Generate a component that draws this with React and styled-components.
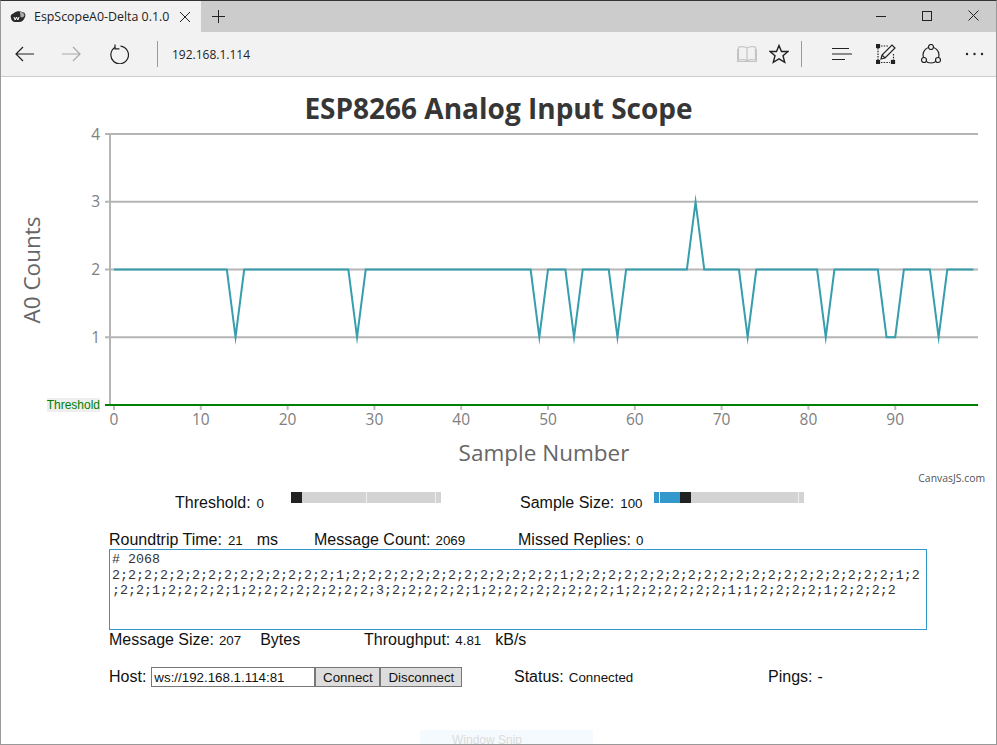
import React from 'react';
import styled, { createGlobalStyle } from 'styled-components';

const GlobalStyle = createGlobalStyle`
html, body { margin: 0; padding: 0; background: #fff; }
body { font-family: "Liberation Sans", Arial, sans-serif; }
`;

const Frame = styled.div`
position: relative;
width: 997px;
height: 745px;
box-sizing: border-box;
overflow: hidden;
background: #fff;
border: 1px solid #999;
border-top-color: #333;
`;

const TabBar = styled.div`
display: flex;
height: 31px;
background: #ccc;
`;
const Tab = styled.div`
display: flex;
align-items: center;
width: 200px;
padding-left: 9px;
box-sizing: border-box;
background: #f2f2f2;
`;
const TabTitle = styled.span`
flex: 1;
margin-left: 8px;
font-family: "Open Sans", sans-serif;
font-size: 12.4px;
color: #222;
white-space: nowrap;
`;
const TabClose = styled.span`
display: flex;
margin-right: 10px;
`;
const NewTab = styled.span`
display: flex;
align-items: center;
margin-left: 11px;
`;
const WindowControls = styled.div`
display: flex;
margin-left: auto;
`;
const WindowButton = styled.span`
display: flex;
align-items: center;
justify-content: center;
width: 46px;
padding-bottom: 2px;
`;

const Toolbar = styled.div`
display: flex;
align-items: center;
height: 44px;
background: #f2f2f2;
border-bottom: 1px solid #ccc;
`;
const Slot = styled.span`
display: flex;
align-items: center;
justify-content: center;
flex: none;
width: ${p => p.$w}px;
padding-bottom: 1px;
`;
const Divider = styled.span`
flex: none;
width: 1px;
height: 26px;
background: #999;
margin-left: ${p => p.$left}px;
margin-right: ${p => p.$right || 0}px;
`;
const Url = styled.span`
margin-left: 14px;
font-family: "Open Sans", sans-serif;
font-size: 12px;
color: #222;
`;
const ToolbarRight = styled.div`
display: flex;
align-items: center;
margin-left: auto;
`;

const ChartSvg = styled.svg`
display: block;
width: 995px;
height: 413px;
`;
const Title = styled.text`
font-family: "Open Sans", sans-serif;
font-weight: 700;
font-size: 28px;
fill: #363636;
text-anchor: middle;
`;
const AxisTitle = styled.text`
font-family: "Open Sans", sans-serif;
font-size: 22.5px;
fill: #666;
text-anchor: middle;
`;
const TickLabel = styled.text`
font-family: "Open Sans", sans-serif;
font-size: 15.5px;
fill: #808080;
text-anchor: ${p => p.$anchor};
`;
const ThresholdLabel = styled.text`
font-family: "Liberation Sans", sans-serif;
font-size: 12px;
fill: #008000;
text-anchor: end;
`;
const Credit = styled.text`
font-family: "Open Sans", sans-serif;
font-size: 10.4px;
fill: #555;
text-anchor: end;
`;

const SliderRow = styled.div`
display: flex;
height: 26px;
padding-left: 174px;
`;
const StatRow = styled.div`
display: flex;
align-items: center;
height: ${p => p.$h}px;
margin-top: ${p => p.$top}px;
padding-left: 108px;
`;
const Cell = styled.div`
display: flex;
align-items: center;
flex: none;
width: ${p => p.$w}px;
margin-left: ${p => p.$left || 0}px;
white-space: nowrap;
`;
const Label = styled.span`
font-size: 16px;
color: #111;
`;
const Value = styled.span`
margin-left: ${p => p.$gap || 5}px;
font-size: 13.33px;
color: #111;
`;
const Unit = styled.span`
margin-left: ${p => p.$left}px;
font-size: 16px;
color: #111;
`;

const Track = styled.div`
position: relative;
display: flex;
flex: none;
width: 150px;
height: 11px;
margin-top: 2px;
background: #d3d3d3;
`;
const Fill = styled.span`
flex: none;
width: ${p => p.$w}px;
background: #3399cc;
`;
const Thumb = styled.span`
flex: none;
width: 11px;
background: #222;
`;
const Tick = styled.span`
position: absolute;
top: 0;
bottom: 0;
left: ${p => p.$at}px;
width: 1px;
background: #eee;
`;

const LogBox = styled.textarea`
display: block;
width: 818px;
height: 81px;
margin: 0 0 0 108px;
padding: 2px 2px;
box-sizing: border-box;
border: 1px solid #3399cc;
border-radius: 0;
outline: none;
resize: none;
overflow: hidden;
font-family: "Liberation Mono", monospace;
font-size: 13.33px;
line-height: 15.5px;
color: #333;
white-space: pre;
`;

const HostInput = styled.input`
width: 164px;
height: 20px;
box-sizing: border-box;
margin: 0 0 0 5px;
padding: 0 2px;
border: 1px solid #777;
border-radius: 0;
font-family: "Liberation Sans", sans-serif;
font-size: 13.33px;
color: #111;
outline: none;
`;
const ActionButton = styled.button`
width: ${p => p.$w}px;
height: 20px;
box-sizing: border-box;
margin: 0;
padding: 0;
border: 1px solid #777;
background: #ddd;
font-family: "Liberation Sans", sans-serif;
font-size: 13.33px;
color: #111;
`;

const SnipHint = styled.div`
position: absolute;
left: 419px;
bottom: 0;
width: 173px;
height: 14px;
padding-left: 32px;
box-sizing: border-box;
background: #f4fafe;
font-size: 12px;
line-height: 20px;
color: #dcdcdc;
overflow: hidden;
`;

const samples = Array.from({ length: 100 }, () => 2);
[14, 28, 49, 53, 58, 73, 82, 89, 90, 95].forEach(i => { samples[i] = 1; });
samples[67] = 3;

const xAt = i => 114 + i * 8.68;
const yAt = v => 405 - v * 67.75;
const points = samples.map((v, i) => `${xAt(i).toFixed(2)},${yAt(v).toFixed(2)}`).join(' ');
const joined = samples.join(';');
// the box breaks right after 101 characters, even before a semicolon
const logText = `# 2068\n${joined.slice(0, 101)}\n${joined.slice(101)}`;

const Icon = ({ w = 20, h = 20, children, color = '#222', sw = 1.2 }) => (
  <svg width={w} height={h} viewBox={`0 0 ${w} ${h}`} fill="none" stroke={color} strokeWidth={sw}>
    {children}
  </svg>
);

const Chart = () => (
  <ChartSvg viewBox="1 77 995 413">
    <Title x="498.5" y="119">ESP8266 Analog Input Scope</Title>
    {[4, 3, 2, 1].map(v => (
      <g key={v}>
        <line x1="105" x2="978" y1={yAt(v)} y2={yAt(v)} stroke="#b5b5b5" strokeWidth="2" />
        <TickLabel $anchor="end" x="100" y={yAt(v) + 5.5}>{v}</TickLabel>
      </g>
    ))}
    <line x1="110" x2="110" y1="133" y2="406" stroke="#b5b5b5" strokeWidth="2" />
    {[0, 10, 20, 30, 40, 50, 60, 70, 80, 90].map(v => (
      <g key={v}>
        <line x1={xAt(v)} x2={xAt(v)} y1="405" y2="410" stroke="#bbb" strokeWidth="2" />
        <TickLabel $anchor="middle" x={xAt(v)} y="425">{v}</TickLabel>
      </g>
    ))}
    <line x1="105" x2="978" y1="405" y2="405" stroke="#008000" strokeWidth="2" />
    <rect x="47" y="398" width="53" height="14" fill="#eee" />
    <ThresholdLabel x="100" y="409">Threshold</ThresholdLabel>
    <polyline points={points} fill="none" stroke="#369ead" strokeWidth="2" strokeMiterlimit="10" />
    <AxisTitle transform="translate(40 270) rotate(-90)" x="0" y="0">A0 Counts</AxisTitle>
    <AxisTitle x="544" y="461">Sample Number</AxisTitle>
    <Credit x="985" y="482">CanvasJS.com</Credit>
  </ChartSvg>
);

const App = () => (
  <Frame>
    <GlobalStyle />
    <TabBar>
      <Tab>
        <svg width="16" height="12" viewBox="0 0 16 12">
          <path d="M1 7c-1-3 1-4 3-5 2-2 6-2 8-1 3 0 4 3 3 5-1 3-3 5-6 5H5C3 11 1 9 1 7z" fill="#2a2a2a" />
          <path d="M10 1c2-.5 4 1 4.500 3-.5 2-2 3-4 2z" fill="#aaa" />
          <path d="M4 6l1.200 3 1.300-3 1.300 3 1.200-3" stroke="#fff" fill="none" strokeWidth="1" />
        </svg>
        <TabTitle>EspScopeA0-Delta 0.1.0</TabTitle>
        <TabClose>
          <Icon w={12} h={12} sw={1}><path d="M1 1l10 10M11 1L1 11" /></Icon>
        </TabClose>
      </Tab>
      <NewTab>
        <Icon w={13} h={13} sw={1}><path d="M6.500 0v13M0 6.500h13" /></Icon>
      </NewTab>
      <WindowControls>
        <WindowButton><Icon w={10} h={10} sw={1}><path d="M0 5.500h10" /></Icon></WindowButton>
        <WindowButton><Icon w={10} h={10} sw={1}><rect x=".5" y=".5" width="9" height="9" /></Icon></WindowButton>
        <WindowButton><Icon w={11} h={11} sw={1}><path d="M.5.5l10 10M10.500.5l-10 10" /></Icon></WindowButton>
      </WindowControls>
    </TabBar>
    <Toolbar>
      <Slot $w={47}><Icon w={19} h={16}><path d="M19 8H1M8 1L1 8l7 7" /></Icon></Slot>
      <Slot $w={47}><Icon w={19} h={16} color="#aaa"><path d="M0 8h18M11 1l7 7-7 7" /></Icon></Slot>
      <Slot $w={47}>
        <Icon w={20} h={20}>
          <path d="M6.300 3.300a8.800 8.800 0 1 0 5.200-1.100" />
          <path d="M6 0.500v4.300h4.400" />
        </Icon>
      </Slot>
      <Divider $left={15} />
      <Url>192.168.1.114</Url>
      <ToolbarRight>
        <Slot $w={32}>
          <Icon w={20} h={18} color="#c4c4c4">
            <path d="M10 3C8 1.500 4 1.500 1.500 2v13c3-.5 6.500-.5 8.500 1 2-1.500 5.500-1.500 8.500-1V2C16 1.500 12 1.500 10 3zM10 3v13" />
            <path d="M.5 4v12.500h19V4" />
          </Icon>
        </Slot>
        <Slot $w={32}>
          <Icon w={20} h={20} sw={1.4}>
            <path d="M10 1.500l2.500 6h6.500l-5 4.300 1.700 6.500-5.700-3.500-5.700 3.500 1.700-6.500-5-4.300h6.500z" />
          </Icon>
        </Slot>
        <Divider $left={6} $right={19} />
        <Slot $w={42}>
          <Icon w={20} h={14} sw={1.1}><path d="M0 1.500h17M0 7h20M0 12.500h13" /></Icon>
        </Slot>
        <Slot $w={45}>
          <Icon w={20} h={20} sw={1.2}>
            <path d="M2 4v13M5 2h8M5 18.500h9M17.500 10v6" strokeDasharray="1.500 1.200" />
            <rect x=".5" y=".5" width="3" height="3" fill="#222" />
            <rect x=".5" y="16.500" width="3" height="3" fill="#222" />
            <rect x="15.500" y="16.500" width="3" height="3" fill="#222" />
            <path d="M5 15l1-4L16 1l3 3L9 14zM6 11l3 3" />
          </Icon>
        </Slot>
        <Slot $w={45}>
          <Icon w={20} h={20} sw={1.2}>
            <circle cx="10" cy="11" r="8" />
            <circle cx="10" cy="3" r="2.500" fill="#f2f2f2" />
            <circle cx="3" cy="16" r="2.500" fill="#f2f2f2" />
            <circle cx="17" cy="16" r="2.500" fill="#f2f2f2" />
          </Icon>
        </Slot>
        <Slot $w={43}>
          <svg width="19" height="4" viewBox="0 0 19 4" fill="#222">
            <circle cx="2" cy="2" r="1.200" />
            <circle cx="9.500" cy="2" r="1.200" />
            <circle cx="17" cy="2" r="1.200" />
          </svg>
        </Slot>
      </ToolbarRight>
    </Toolbar>

    <Chart />

    <SliderRow>
      <Cell $w={116}>
        <Label>Threshold:</Label><Value $gap={6}>0</Value>
      </Cell>
      <Track>
        <Thumb />
        <Tick $at={75} />
        <Tick $at={144} />
      </Track>
      <Cell $w={134} $left={79}>
        <Label>Sample Size:</Label><Value $gap={6}>100</Value>
      </Cell>
      <Track>
        <Fill $w={26} />
        <Thumb />
        <Tick $at={5} />
        <Tick $at={144} />
      </Track>
    </SliderRow>

    <StatRow $h={18} $top={15}>
      <Cell $w={205}>
        <Label>Roundtrip Time:</Label><Value $gap={6}>21</Value><Unit $left={14}>ms</Unit>
      </Cell>
      <Cell $w={204}>
        <Label>Message Count:</Label><Value>2069</Value>
      </Cell>
      <Cell $w={200}>
        <Label>Missed Replies:</Label><Value>0</Value>
      </Cell>
    </StatRow>

    <LogBox readOnly value={logText} />

    <StatRow $h={20} $top={0}>
      <Cell $w={255}>
        <Label>Message Size:</Label><Value>207</Value><Unit $left={19}>Bytes</Unit>
      </Cell>
      <Cell $w={250}>
        <Label>Throughput:</Label><Value>4.81</Value><Unit $left={14}>kB/s</Unit>
      </Cell>
    </StatRow>

    <StatRow $h={20} $top={17}>
      <Cell $w={405}>
        <Label>Host:</Label>
        <HostInput readOnly value="ws://192.168.1.114:81" />
        <ActionButton $w={65}>Connect</ActionButton>
        <ActionButton $w={82}>Disconnect</ActionButton>
      </Cell>
      <Cell $w={254}>
        <Label>Status:</Label><Value>Connected</Value>
      </Cell>
      <Cell $w={100}>
        <Label>Pings:</Label><Unit $left={5}>-</Unit>
      </Cell>
    </StatRow>

    <SnipHint>Window Snip</SnipHint>
  </Frame>
);

export default App;
